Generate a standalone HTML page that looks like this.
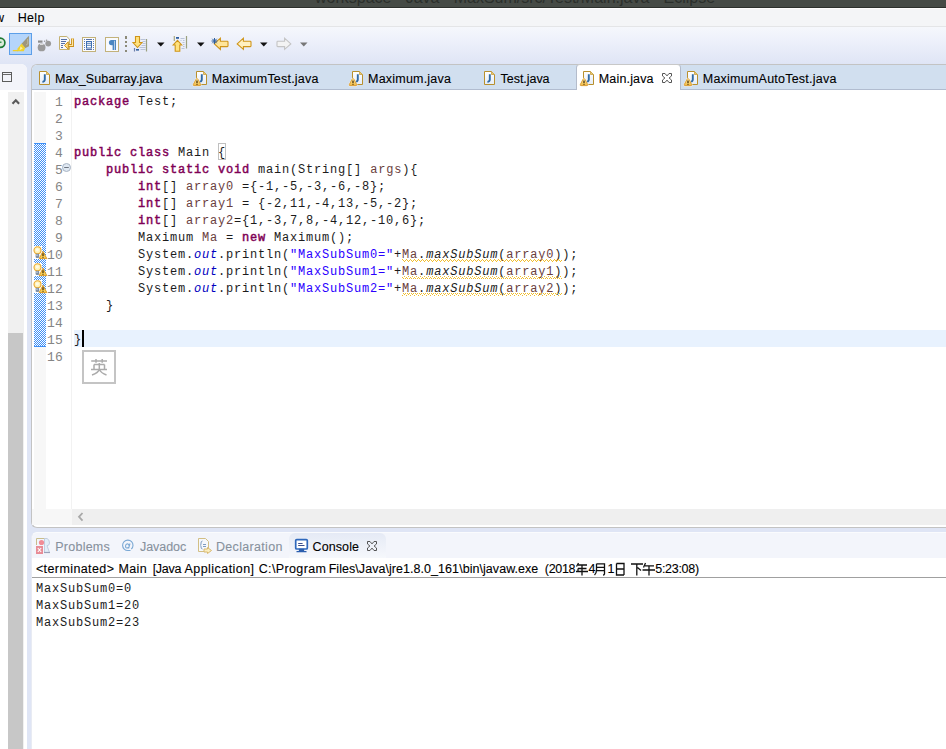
<!DOCTYPE html>
<html><head><meta charset="utf-8">
<style>
*{margin:0;padding:0;box-sizing:border-box}
html,body{width:946px;height:749px;overflow:hidden;background:#dfe5f5;font-family:"Liberation Sans",sans-serif;position:relative}
.a{position:absolute}
svg{position:absolute;overflow:visible}
.ui{font-size:12.5px;line-height:12.5px;white-space:pre;color:#000;-webkit-text-stroke:0.1px currentColor}
.code{font-family:"Liberation Mono",monospace;font-size:12px;letter-spacing:0.8px;line-height:17px;white-space:pre;color:#1c1c1c}
.k{color:#7f0055;font-weight:normal;-webkit-text-stroke:0.45px #7f0055}
.v{color:#6a3e3e}
.s{color:#2a00ff}
.f{color:#0000c0;font-style:italic}
.i{font-style:italic}
.ln{font-family:"Liberation Mono",monospace;font-size:13px;letter-spacing:0.2px;line-height:17px;color:#858585;white-space:pre;text-align:right}
.chk{background:repeating-conic-gradient(#3d8ff7 0 25%,#ffffff 0 50%) 0 0/2px 2px}
</style></head><body>
<!-- title bar -->
<div class="a" style="left:0;top:0;width:946px;height:8px;background:#464b46"></div>
<div class="a" style="left:0;top:7px;width:946px;height:1px;background:#2c302c"></div>
<div class="a" style="left:0;top:0;width:946px;height:7px;overflow:hidden"><span class="a" style="left:315px;top:-10.5px;font-size:16px;line-height:16px;color:#2b2f2b;white-space:pre;letter-spacing:0px">workspace - Java - MaxSum/src/Test/Main.java - Eclipse</span></div>
<!-- menu bar -->
<div class="a" style="left:0;top:8px;width:946px;height:19px;background:#f4f5f7"></div>
<div class="a" style="left:0;top:8px;width:946px;height:1px;background:#fdfdfd"></div>
<div class="a" style="left:0;top:26px;width:946px;height:1px;background:#e4e5e7"></div>
<!-- toolbar -->
<div class="a" style="left:0;top:27px;width:946px;height:37px;background:linear-gradient(#f5f7fc,#eff2fb 30%,#dfe5f5)"></div>

<!-- left panel -->
<div class="a" style="left:0;top:64px;width:27px;height:685px;background:#fff;border-top-right-radius:6px;overflow:hidden">
  <div class="a" style="left:0;top:0;width:27px;height:26px;background:#f3f4fa"></div>
</div>
<div class="a" style="left:2px;top:72px;width:10px;height:10px;border:1px solid #5c5c5c"></div><div class="a" style="left:3px;top:74px;width:8px;height:1px;background:#6a6a6a"></div>
<div class="a" style="left:8px;top:92px;width:16px;height:657px;background:#f0f0f0"></div>
<svg style="left:11px;top:97px" width="10" height="9"><path d="M1.5 6.8 L4.8 3.2 L8.1 6.8" fill="none" stroke="#5a5a5a" stroke-width="2.1"/></svg>
<div class="a" style="left:8px;top:333px;width:15px;height:416px;background:#c7c7c7"></div>

<!-- editor panel -->
<div class="a" style="left:31px;top:64px;width:920px;height:464px;background:#fff;border:1px solid #c3c3c3;border-right:none;border-radius:6px 0 0 6px;overflow:hidden">
  <div class="a" style="left:0;top:0;width:920px;height:25px;background:#d1dfef"></div>
  <div class="a" style="left:0;top:24px;width:920px;height:1px;background:#b1bccf"></div>
</div>
<!-- active tab -->
<div class="a" style="left:576px;top:64px;width:105px;height:26px;background:#fff;border:1px solid #b4bccb;border-top-color:#c8c8c8;border-bottom:none;border-radius:4px 4px 0 0"></div>


<!-- gutter -->
<div class="a" style="left:32px;top:92px;width:14px;height:433px;background:#f7f7f7"></div>
<div class="a" style="left:32px;top:90px;width:2px;height:419px;background:#fff"></div>
<div class="a chk" style="left:34px;top:143px;width:12px;height:204px;border-top:1px solid #3d8ff7;border-bottom:1px solid #3d8ff7"></div>
<div class="a" style="left:71px;top:90px;width:1px;height:419px;background:#f2f2f2"></div>
<div class="a" style="left:46px;top:509px;width:26px;height:16px;background:#f7f7f7"></div>
<div class="a" style="left:72px;top:509px;width:874px;height:16px;background:#efefef"></div>
<svg style="left:77px;top:512px" width="8" height="10"><path d="M5.5 1 L2 4.8 L5.5 8.6" fill="none" stroke="#a8a8a8" stroke-width="1.8"/></svg>
<!-- current line -->
<div class="a" style="left:74px;top:330px;width:872px;height:17px;background:#e8f2fe"></div>
<div class="a" style="left:82px;top:330px;width:2px;height:17px;background:#000"></div>
<div class="a" style="left:218px;top:143px;width:8px;height:17px;border:1px solid #c0c0c0"></div>

<div class="a ln" style="left:42px;top:93.5px;width:21px">1
2
3
4
5
6
7
8
9
10
11
12
13
14
15
16</div>

<div class="a code" style="left:74px;top:94px"><span class="k">package</span> Test;


<span class="k">public</span> <span class="k">class</span> Main {
    <span class="k">public</span> <span class="k">static</span> <span class="k">void</span> main(String[] <span class="v">args</span>){
        <span class="k">int</span>[] <span class="v">array0</span> ={-1,-5,-3,-6,-8};
        <span class="k">int</span>[] <span class="v">array1</span> = {-2,11,-4,13,-5,-2};
        <span class="k">int</span>[] <span class="v">array2</span>={1,-3,7,8,-4,12,-10,6};
        Maximum <span class="v">Ma</span> = <span class="k">new</span> Maximum();
        System.<span class="f">out</span>.println(<span class="s">"MaxSubSum0="</span>+<span class="v">Ma</span>.<span class="i">maxSubSum</span>(<span class="v">array0</span>));
        System.<span class="f">out</span>.println(<span class="s">"MaxSubSum1="</span>+<span class="v">Ma</span>.<span class="i">maxSubSum</span>(<span class="v">array1</span>));
        System.<span class="f">out</span>.println(<span class="s">"MaxSubSum2="</span>+<span class="v">Ma</span>.<span class="i">maxSubSum</span>(<span class="v">array2</span>));
    }

}</div>

<!-- console panel -->
<div class="a" style="left:31px;top:532px;width:920px;height:230px;background:#fff;border-left:1px solid #e8ebf3;border-top:1px solid #fafbfd;border-radius:6px 0 0 0;overflow:hidden">
  <div class="a" style="left:0;top:0;width:920px;height:25px;background:#f3f5fb"></div>
</div>
<div class="a" style="left:289px;top:533px;width:97px;height:25px;background:linear-gradient(#e5eaf5,#f6f8fc);border-radius:6px 6px 0 0"></div>
<div class="a" style="left:32px;top:577px;width:914px;height:1px;background:#a0a0a0"></div>
<div class="a code" style="left:36px;top:581px">MaxSubSum0=0
MaxSubSum1=20
MaxSubSum2=23</div>

<!-- ===== toolbar icons ===== -->
<svg style="left:-8px;top:36px" width="14" height="14"><circle cx="8.3" cy="6.8" r="4.6" fill="#dcebd9" stroke="#1d7a33" stroke-width="1.7"/><path d="M4.5 6.3 H9.5" stroke="#3a9a55" stroke-width="1.6"/></svg>
<div class="a" style="left:9px;top:33px;width:23px;height:22px;background:#b5d5fb;border:1px solid #5c9fe9"></div>
<svg style="left:9px;top:33px" width="23" height="22">
  <path d="M19.9 2.8 L20 13.2 L16 15.2 L12.6 10.8 Z" fill="#9d967c"/>
  <path d="M18.6 6 L18.8 11 L17 12" stroke="#c4bea8" stroke-width="0.8" fill="none"/>
  <path d="M12.6 10.6 L16.2 15 L14.8 18.3 L8.2 18.3 L8.6 15.6 Z" fill="#f0d22e"/>
  <path d="M11.5 13.2 L13.8 15.6 L10.5 17.2 Z" fill="#fdf0a0"/>
  <path d="M3.8 17.6 H9" stroke="#f0cf2a" stroke-width="1.3"/>
</svg>
<svg style="left:34px;top:34px" width="20" height="20">
  <rect x="4" y="6.5" width="4.5" height="2.2" fill="#8c8c8c"/>
  <circle cx="7.6" cy="13.4" r="3.9" fill="#9a9a9a"/>
  <rect x="6" y="9.8" width="3.5" height="1" fill="#eeeeee"/>
  <circle cx="14.2" cy="9.6" r="2.9" fill="#9a9a9a"/>
  <circle cx="10.6" cy="7.2" r="0.8" fill="#999"/><circle cx="12.6" cy="6.2" r="0.8" fill="#999"/>
</svg>
<svg style="left:56px;top:34px" width="20" height="20">
  <path d="M3.5 2.5 H10.8 L13.5 5.2 V15.5 H3.5 Z" fill="#f6f8fc" stroke="#c5b272" stroke-width="1"/>
  <path d="M5 5.5 H11 M5 7.5 H10 M5 9.5 H9 M5 11.5 H7 M5 13.5 H7" stroke="#5470a8" stroke-width="1"/>
  <path d="M16.5 4.5 V11.5 H11" fill="none" stroke="#c9901d" stroke-width="3"/>
  <path d="M16.5 4.5 V11.5 H11" fill="none" stroke="#ffe6a0" stroke-width="1.2"/>
  <path d="M8.5 11.5 L12.3 7.8 V15.2 Z" fill="#ffe08a" stroke="#c9901d" stroke-width="1"/>
</svg>
<svg style="left:80px;top:34px" width="20" height="20">
  <rect x="2.5" y="3.5" width="13" height="14" fill="#fbfcfe" stroke="#c3b27a" stroke-width="1"/>
  <path d="M4.5 5 V16" stroke="#5d7bb0" stroke-width="1" stroke-dasharray="1 1"/>
  <path d="M13.5 5 V16" stroke="#5d7bb0" stroke-width="1" stroke-dasharray="1 1"/>
  <path d="M6 5.5 H12 M6 15.5 H12" stroke="#5a72a8" stroke-width="1"/>
  <rect x="6.5" y="7.5" width="5" height="6.5" fill="#fff" stroke="#3d6fb0" stroke-width="1"/>
  <path d="M7 9.3 H11 M7 11.3 H11" stroke="#3d6fb0" stroke-width="0.9"/>
</svg>
<svg style="left:103px;top:34px" width="20" height="20">
  <rect x="2.5" y="3.5" width="13" height="14" fill="#f8fafe" stroke="#c3b27a" stroke-width="1"/>
  <path d="M13 6 H8.5 A2.6 2.6 0 0 0 8.5 11.2 H9.6 V16 H11 V6.8 H11.6 V16 H13 Z" fill="#4b86c2"/>
</svg>
<svg style="left:122px;top:34px" width="6" height="20">
  <rect x="3" y="2" width="2" height="3" fill="#8c8a78"/><rect x="3" y="7" width="2" height="2" fill="#8c8a78"/>
  <rect x="3" y="11" width="2" height="2" fill="#8c8a78"/><rect x="3" y="16" width="2" height="2" fill="#8c8a78"/>
</svg>
<svg style="left:130px;top:34px" width="20" height="20">
  <path d="M10.5 5.5 H15.5 M12.5 7.5 H15.5 M12.5 9.5 H15.5 M11.5 11.5 H15.5 M9.5 13.5 H15.5 M10.5 15.5 H15.5" stroke="#b9c3d8" stroke-width="1"/>
  <path d="M16.5 5 V17.5" stroke="#9ba07e" stroke-width="1.2"/>
  <path d="M4.5 14 V17.5" stroke="#6b7ea8" stroke-width="1.2"/>
  <rect x="6" y="15" width="3" height="1.6" fill="#2f5f9f"/>
  <path d="M5.5 2.5 H9.5 V8.5 H12 L7.5 13.5 L3 8.5 H5.5 Z" fill="#ffe27e" stroke="#cf9519" stroke-width="1.1"/>
</svg>
<svg style="left:156.8px;top:41.7px" width="8" height="5"><path d="M0 0.5 H7.5 L3.75 4.5 Z" fill="#111"/></svg>
<svg style="left:168px;top:34px" width="24" height="20">
  <path d="M12.5 4.5 H16.5 M12.5 6.5 H13.5 M15 6.5 H16.5 M14.5 8.5 H16.5 M15 10.5 H16.5 M15 12.5 H16.5 M13.5 14.5 H16.5" stroke="#b9c3d8" stroke-width="1"/>
  <path d="M18.5 2 V14.5" stroke="#9ba07e" stroke-width="1.2"/>
  <path d="M6.3 2 V7" stroke="#a8a67e" stroke-width="1.2"/>
  <rect x="8" y="3" width="3" height="1.8" fill="#2f5f9f"/>
  <path d="M9.5 6.3 L13.7 11 H11.8 V17.3 H7.2 V11 H5.2 Z" fill="#ffe27e" stroke="#cf9519" stroke-width="1.1"/>
</svg>
<svg style="left:196.8px;top:41.7px" width="8" height="5"><path d="M0 0.5 H7.5 L3.75 4.5 Z" fill="#111"/></svg>
<svg style="left:208px;top:34px" width="48" height="20">
  <path d="M6.2 9.7 L12.4 4.2 V7.3 H19.3 A0.8 0.8 0 0 1 20 8 V11.9 A0.8 0.8 0 0 1 19.3 12.6 H12.4 V15.4 Z" fill="#ffe59a" stroke="#cf9519" stroke-width="1.1"/>
  <path d="M6.5 4 V10 M3.5 7 H9.5 M4.3 4.8 L8.7 9.2 M8.7 4.8 L4.3 9.2" stroke="#2e5f9e" stroke-width="1"/>
  <path d="M29.2 9.9 L35.4 4.2 V7.3 H42.3 A0.8 0.8 0 0 1 43 8 V11.9 A0.8 0.8 0 0 1 42.3 12.6 H35.4 V15.4 Z" fill="#fff0c0" stroke="#cf9519" stroke-width="1.1"/>
</svg>
<svg style="left:259.8px;top:41.7px" width="8" height="5"><path d="M0 0.5 H7.5 L3.75 4.5 Z" fill="#111"/></svg>
<svg style="left:274px;top:34px" width="20" height="20">
  <path d="M16.8 9.9 L10.6 4.2 V7.3 H3.7 A0.8 0.8 0 0 0 3 8 V11.9 A0.8 0.8 0 0 0 3.7 12.6 H10.6 V15.4 Z" fill="#f3f3f3" stroke="#c4c4c4" stroke-width="1.1"/>
</svg>
<svg style="left:300px;top:41.7px" width="8" height="5"><path d="M0 0.5 H7.5 L3.75 4.5 Z" fill="#777"/></svg>
<!-- ===== tab icons ===== -->
<svg width="0" height="0" style="left:0;top:0"><defs>
<linearGradient id="docg" x1="0" y1="0" x2="0" y2="1"><stop offset="0" stop-color="#ffffff"/><stop offset="1" stop-color="#e4ecf6"/></linearGradient>
<linearGradient id="warng" x1="0" y1="0" x2="0" y2="1"><stop offset="0" stop-color="#fff2b0"/><stop offset="1" stop-color="#f0b840"/></linearGradient>
<g id="jdoc"><path d="M0.5 0.5 H7.5 L10.5 3.5 V13.5 H0.5 Z" fill="url(#docg)" stroke="#b8902e" stroke-width="1"/><path d="M7.5 0.5 V3.5 H10.5" fill="#e8c870" stroke="#c9a040" stroke-width="0.8"/><path d="M5.8 3.2 V8.6 Q5.8 10.8 3.4 10.9" fill="none" stroke="#2f6aa6" stroke-width="1.9"/></g>
<g id="warn"><path d="M4 0.6 Q4.6 0.6 5 1.3 L7.7 6.6 Q8 7.6 7 7.6 H1 Q0 7.6 0.3 6.6 L3 1.3 Q3.4 0.6 4 0.6Z" fill="#fff" stroke="#fff" stroke-width="1.6" opacity="0.8"/><path d="M4 0.6 Q4.6 0.6 5 1.3 L7.7 6.6 Q8 7.6 7 7.6 H1 Q0 7.6 0.3 6.6 L3 1.3 Q3.4 0.6 4 0.6Z" fill="url(#warng)" stroke="#d8962a" stroke-width="0.9"/><path d="M4 2.4 V5 M4 5.8 V6.8" stroke="#3a2200" stroke-width="1.2"/></g>
<g id="xcl"><path d="M0.5 0.5 H3 L5 2.9 L7 0.5 H9.5 V3 L7.1 5 L9.5 7 V9.5 H7 L5 7.1 L3 9.5 H0.5 V7 L2.9 5 L0.5 3 Z" fill="none" stroke="#555" stroke-width="1" stroke-linejoin="miter"/></g>
</defs></svg>
<svg style="left:39px;top:71px" width="12" height="15"><use href="#jdoc"/></svg>
<svg style="left:196px;top:71px" width="12" height="15"><use href="#jdoc"/></svg>
<svg style="left:193px;top:78px" width="9" height="9"><use href="#warn"/></svg>
<svg style="left:352px;top:71px" width="12" height="15"><use href="#jdoc"/></svg>
<svg style="left:349px;top:78px" width="9" height="9"><use href="#warn"/></svg>
<svg style="left:484px;top:71px" width="12" height="15"><use href="#jdoc"/></svg>
<svg style="left:583px;top:71px" width="12" height="15"><use href="#jdoc"/></svg>
<svg style="left:580px;top:78px" width="9" height="9"><use href="#warn"/></svg>
<svg style="left:662px;top:73px" width="11" height="11"><use href="#xcl"/></svg>
<svg style="left:687px;top:71px" width="12" height="15"><use href="#jdoc"/></svg>
<svg style="left:684px;top:78px" width="9" height="9"><use href="#warn"/></svg>

<!-- ===== gutter icons ===== -->
<svg style="left:62px;top:163px" width="10" height="10"><circle cx="4.5" cy="4.5" r="4" fill="#dfe8f2" stroke="#a8b4c4" stroke-width="1"/><path d="M2.2 4.5 H6.8" stroke="#6c7480" stroke-width="1"/></svg>
<g></g>
<svg style="left:33px;top:245px" width="15" height="16"><path d="M1 1 H9 V6 L14 14 H1 Z" fill="#fff"/><circle cx="4.5" cy="5.3" r="3.5" fill="#fff3b8" stroke="#eaa82e" stroke-width="1.1"/><circle cx="4.3" cy="4.8" r="1.6" fill="#fffbe6"/><rect x="2.6" y="8.8" width="3.6" height="4.2" rx="1.2" fill="#7f8fa3"/><rect x="3.3" y="9.6" width="1.4" height="1.2" fill="#d0d8e0"/><path d="M10 6.3 L13.8 13.6 H6.2 Z" fill="#f7cf58" stroke="#dc9a28" stroke-width="1" stroke-linejoin="round"/><path d="M10 8.3 V11 M10 11.8 V12.8" stroke="#3a2200" stroke-width="1.2"/></svg>
<svg style="left:33px;top:262px" width="15" height="16"><path d="M1 1 H9 V6 L14 14 H1 Z" fill="#fff"/><circle cx="4.5" cy="5.3" r="3.5" fill="#fff3b8" stroke="#eaa82e" stroke-width="1.1"/><circle cx="4.3" cy="4.8" r="1.6" fill="#fffbe6"/><rect x="2.6" y="8.8" width="3.6" height="4.2" rx="1.2" fill="#7f8fa3"/><rect x="3.3" y="9.6" width="1.4" height="1.2" fill="#d0d8e0"/><path d="M10 6.3 L13.8 13.6 H6.2 Z" fill="#f7cf58" stroke="#dc9a28" stroke-width="1" stroke-linejoin="round"/><path d="M10 8.3 V11 M10 11.8 V12.8" stroke="#3a2200" stroke-width="1.2"/></svg>
<svg style="left:33px;top:279px" width="15" height="16"><path d="M1 1 H9 V6 L14 14 H1 Z" fill="#fff"/><circle cx="4.5" cy="5.3" r="3.5" fill="#fff3b8" stroke="#eaa82e" stroke-width="1.1"/><circle cx="4.3" cy="4.8" r="1.6" fill="#fffbe6"/><rect x="2.6" y="8.8" width="3.6" height="4.2" rx="1.2" fill="#7f8fa3"/><rect x="3.3" y="9.6" width="1.4" height="1.2" fill="#d0d8e0"/><path d="M10 6.3 L13.8 13.6 H6.2 Z" fill="#f7cf58" stroke="#dc9a28" stroke-width="1" stroke-linejoin="round"/><path d="M10 8.3 V11 M10 11.8 V12.8" stroke="#3a2200" stroke-width="1.2"/></svg>
<!-- squiggles -->
<svg style="left:400px;top:259px" width="160" height="40">
<defs><pattern id="sq" width="4" height="3" patternUnits="userSpaceOnUse"><rect x="0" y="2" width="1" height="1" fill="#f2bd2a"/><rect x="1" y="1" width="1" height="1" fill="#f2bd2a"/><rect x="2" y="0" width="1" height="1" fill="#f2bd2a"/><rect x="3" y="1" width="1" height="1" fill="#f2bd2a"/></pattern></defs>
<rect x="2" y="0" width="160" height="3" fill="url(#sq)"/>
<rect x="2" y="17" width="160" height="3" fill="url(#sq)"/>
<rect x="2" y="34" width="160" height="3" fill="url(#sq)"/>
</svg>
<!-- IME box -->
<div class="a" style="left:82px;top:350px;width:34px;height:34px;background:#fff;border:2px solid #c4c4c4"></div>
<svg style="left:82px;top:350px" width="34" height="34"><g fill="none" stroke="#ababab" stroke-width="1.5"><path d="M9.2 11 H25 M14 9 V12.8 M20.2 9 V12.8 M12 14.6 H22.5 M12 14.6 V19.5 M22.5 14.6 V19.5 M9 19.5 H25 M17.3 13 V19.5 Q16 23 10 25 M17.3 19.5 Q19 23 24.5 25"/></g></svg>

<!-- ===== console tab icons ===== -->
<svg style="left:30px;top:536px" width="26" height="20">
  <path d="M6.5 9 V2.5 H17" fill="none" stroke="#c9bd8c" stroke-width="1"/>
  <path d="M14.5 2.5 H17 Q19.5 3.5 19.5 7 Q19.5 9.5 17 9.7 L19.5 16.5 H14.5 V2.5" fill="#e2eef8" stroke="#c2cde0" stroke-width="1"/>
  <path d="M14 16.5 H20" stroke="#9aa2ba" stroke-width="1.2"/>
  <circle cx="11.5" cy="6.5" r="2.6" fill="#f08c96"/>
  <rect x="6" y="10" width="7" height="8" fill="#e88c96"/>
  <path d="M7.8 12 L11.2 16 M11.2 12 L7.8 16" stroke="#fff" stroke-width="1.1"/>
</svg>
<svg style="left:116px;top:536px" width="20" height="20"><g fill="none" stroke="#7aa8d4" stroke-width="1.1">
<path d="M15.3 13 Q17 11.5 17 9.5 A5.2 5.2 0 1 0 12 14.5 H14.5"/><path d="M14 7.5 L12.6 12.3 M13.2 10 Q12.5 7.4 10.8 8 Q9.2 8.6 9.6 11 Q10.2 12.6 12.5 11.5"/></g></svg>
<svg style="left:194px;top:534px" width="22" height="22">
  <path d="M4.5 4.5 H11.5 L14.5 7.5 V17.5 H4.5 Z" fill="#f6f8fc" stroke="#d2bf85" stroke-width="1"/>
  <path d="M8.5 7 Q7 7 7 9 V10.3 L6.3 11 L7 11.7 V13 Q7 15 8.5 15" fill="none" stroke="#7f9cc0" stroke-width="1"/>
  <path d="M9 10.5 H12 M9 12.5 H12" stroke="#7f9cc0" stroke-width="1"/>
  <path d="M10 15 H13.5 V13.5 L17.5 16.5 L13.5 19.5 V18 H10 Z" fill="#fbeec0" stroke="#d8b870" stroke-width="1"/>
</svg>
<svg style="left:290px;top:534px" width="22" height="22">
  <rect x="5.7" y="5.6" width="11.6" height="9.4" rx="1" fill="#fff" stroke="#2f68bc" stroke-width="1.7"/>
  <path d="M8.2 9.5 H12.6 M8.2 11.5 H14.5" stroke="#3c4f8c" stroke-width="1"/>
  <path d="M9.5 15.5 H13.5 V17 H9.5 Z M6.5 17.6 H16.5" stroke="#2c5fae" stroke-width="1.3" fill="#2c5fae"/>
</svg>
<svg style="left:367px;top:541px" width="11" height="11"><use href="#xcl"/></svg>

<!-- CJK in console header -->
<svg style="left:575px;top:562px" width="82" height="14"><g fill="none" stroke="#111" stroke-width="1.3">
<path d="M3.5 1 L1.5 4.5 M3 3 H12 M3 6.5 H11.5 M1 9.5 H13 M7 3 V13.5 M3 6.5 V9.5"/>
<path d="M21.5 1.8 H29.5 V12 Q29.5 13 28 13 M21.5 1.8 V8 Q21.5 11 19.5 13 M21.5 5.3 H29.5 M21.5 8.7 H29.5"/>
<path d="M41.5 1.5 H49 V13 M41.5 1.5 V13 H49 M41.5 7 H49"/>
<path d="M56 2 H68 M61.8 2 V13.5 M62.5 5.5 L66 8.5"/>
<path d="M70.5 1 L68.5 5.5 M70 3.8 H79 M67.5 8 H80 M74 3.8 V13.5"/>
</g></svg>

<span class="a ui" style="left:-5.00px;top:12.42px;letter-spacing:-0.300px;color:#000;">w</span>
<span class="a ui" style="left:17.70px;top:12.42px;letter-spacing:0.315px;color:#000;">Help</span>
<span class="a ui" style="left:55.00px;top:73.42px;letter-spacing:0.049px;color:#000;">Max_Subarray.java</span>
<span class="a ui" style="left:211.70px;top:73.42px;letter-spacing:0.217px;color:#000;">MaximumTest.java</span>
<span class="a ui" style="left:368.00px;top:73.42px;letter-spacing:0.216px;color:#000;">Maximum.java</span>
<span class="a ui" style="left:500.60px;top:73.42px;letter-spacing:-0.047px;color:#000;">Test.java</span>
<span class="a ui" style="left:598.80px;top:73.42px;letter-spacing:0.157px;color:#000;">Main.java</span>
<span class="a ui" style="left:702.80px;top:73.42px;letter-spacing:0.228px;color:#000;">MaximumAutoTest.java</span>
<span class="a ui" style="left:55.30px;top:541.42px;letter-spacing:0.236px;color:#87919d;">Problems</span>
<span class="a ui" style="left:140.00px;top:541.42px;letter-spacing:-0.051px;color:#87919d;">Javadoc</span>
<span class="a ui" style="left:216.00px;top:541.42px;letter-spacing:0.313px;color:#87919d;">Declaration</span>
<span class="a ui" style="left:312.60px;top:541.42px;letter-spacing:0.082px;color:#000;">Console</span>
<span class="a ui" style="left:35.90px;top:562.92px;letter-spacing:0.404px;color:#000;">&lt;terminated&gt;</span>
<span class="a ui" style="left:118.60px;top:562.92px;letter-spacing:0.319px;color:#000;">Main</span>
<span class="a ui" style="left:152.70px;top:562.92px;letter-spacing:-0.300px;color:#000;">[Java</span>
<span class="a ui" style="left:184.50px;top:562.92px;letter-spacing:0.450px;color:#000;">Application]</span>
<span class="a ui" style="left:258.70px;top:562.92px;letter-spacing:0.368px;color:#000;">C:\Program</span>
<span class="a ui" style="left:328.70px;top:562.92px;letter-spacing:0.052px;color:#000;">Files\Java\jre1.8.0_161\bin\javaw.exe</span>
<span class="a ui" style="left:544.80px;top:562.92px;letter-spacing:-0.300px;color:#000;">(2018</span>
<span class="a ui" style="left:588.50px;top:562.92px;letter-spacing:0.500px;color:#000;">4</span>
<span class="a ui" style="left:607.50px;top:562.92px;letter-spacing:-0.300px;color:#000;">1</span>
<span class="a ui" style="left:655.30px;top:562.92px;letter-spacing:-0.300px;color:#000;">5:23:08)</span>
</body></html>
